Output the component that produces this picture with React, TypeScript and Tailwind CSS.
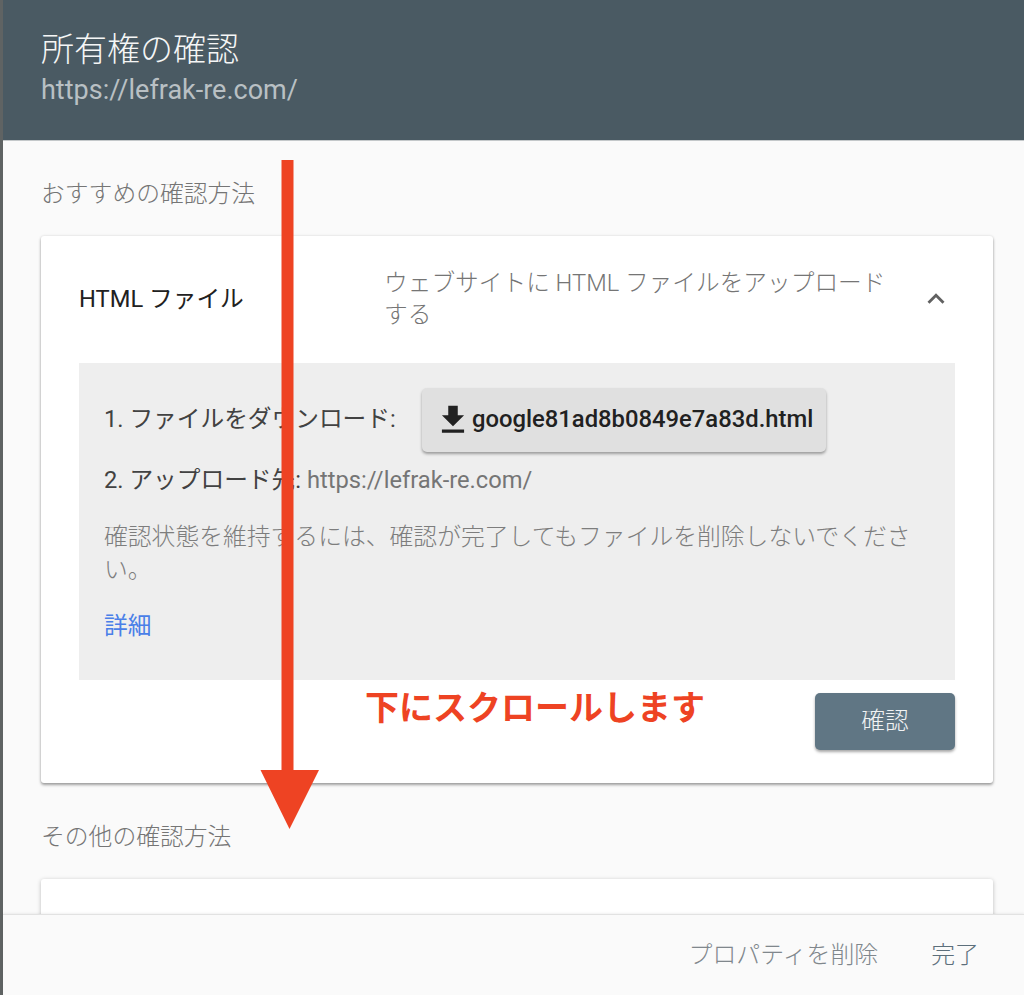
import React from "react";

const font = "font-['Roboto','Noto_Sans_CJK_JP',sans-serif]";

const DownloadIcon = () => (
  <svg width="38" height="38" viewBox="0 0 24 24" className="fill-[#212121] shrink-0">
    <path d="M19 9h-4V3H9v6H5l7 7 7-7zM5 18v2h14v-2H5z" />
  </svg>
);

const ChevronUp = () => (
  <svg width="34" height="34" viewBox="0 0 24 24" className="fill-[#616161] shrink-0">
    <path d="M12 8l-6 6 1.41 1.41L12 10.83l4.59 4.58L18 14z" />
  </svg>
);

const App: React.FC = () => {
  return (
    <div className={`relative flex w-[1024px] h-[995px] overflow-hidden bg-[#fafafa] ${font}`}>
      <div className="w-[3px] shrink-0 bg-[#5f6363]" />
      <div className="flex flex-col flex-1 min-w-0">
        <header className="h-[141px] shrink-0 bg-[#4a5a63] pl-[38px] pt-[30px] border-b border-[#c4c8ca]">
          <h1 className="text-[33px] leading-[40px] font-light text-[#f5f6f6]">所有権の確認</h1>
          <p className="text-[27px] leading-[30px] mt-[5px] text-[#b9c0c4]">https://lefrak-re.com/</p>
        </header>

        <main className="flex-1 min-h-0 overflow-hidden pl-[38px] pr-[31px]">
          <h2 className="text-[23.8px] leading-[32px] font-light text-[#757575] mt-[37px]">おすすめの確認方法</h2>

          <section className="mt-[26px] h-[547px] bg-white rounded-[3px] shadow-[0_2px_3px_rgba(0,0,0,0.35),0_0_3px_rgba(0,0,0,0.12)] px-[38px]">
            <div className="flex items-center h-[127px]">
              <div className="w-[305px] shrink-0 text-[23.7px] text-[#212121]">HTML ファイル</div>
              <div className="w-[510px] shrink-0 -mt-[2px] text-[23.7px] leading-[32px] font-light text-[#757575]">
                ウェブサイトに HTML ファイルをアップロードする
              </div>
              <div className="ml-[25px] -mt-[2px]">
                <ChevronUp />
              </div>
            </div>

            <div className="h-[317px] bg-[#eeeeee] pl-[25px] pr-[40px] pt-[25px]">
              <div className="flex items-center h-[64px]">
                <span className="w-[318px] shrink-0 text-[23.7px] text-[#424242]">1. ファイルをダウンロード:</span>
                <button className="flex items-center h-[64px] pl-[12px] pr-[13px] bg-[#e0e0e0] rounded-[5px] shadow-[0_2px_3px_rgba(0,0,0,0.35)] text-[23.8px] font-medium text-[#212121] whitespace-nowrap">
                  <DownloadIcon />
                  google81ad8b0849e7a83d.html
                </button>
              </div>
              <p className="mt-[12px] text-[23.7px] leading-[32px] text-[#424242]">
                2. アップロード先: <span className="text-[#757575]">https://lefrak-re.com/</span>
              </p>
              <p className="mt-[25px] text-[23.8px] leading-[33px] font-light text-[#7d7d7d]">
                確認状態を維持するには、確認が完了してもファイルを削除しないでください。
              </p>
              <a className="block mt-[23px] text-[23.7px] leading-[32px] text-[#4a7fe8]">詳細</a>
            </div>

            <div className="flex justify-end mt-[13px]">
              <button className="w-[140px] h-[57px] bg-[#607684] rounded-[5px] shadow-[0_2px_3px_rgba(0,0,0,0.35)] text-[23.7px] font-light text-[#f1f3f4]">
                確認
              </button>
            </div>
          </section>

          <h2 className="text-[23.8px] leading-[32px] font-light text-[#757575] mt-[38px]">その他の確認方法</h2>
          <section className="mt-[26px] h-[200px] bg-white rounded-[3px] shadow-[0_1px_4px_rgba(0,0,0,0.25)]" />
        </main>

        <footer className="relative h-[81px] shrink-0 bg-[#fafafa] border-t border-[#e2e2e2] shadow-[0_-1px_2px_rgba(0,0,0,0.06)] flex items-center justify-end pr-[45px] gap-[53px] pt-[2px] text-[23.9px] font-light">
          <span className="text-[#80878c]">プロパティを削除</span>
          <span className="text-[#5c6f7b]">完了</span>
        </footer>
      </div>

      {/* annotation painted over the screenshot */}
      <svg width="60" height="670" viewBox="0 0 60 670" className="absolute left-[260px] top-[160px]">
        <path d="M21.5 0H33.5V610H59L29.5 669L0.5 610H21.5Z" fill="#ee4323" />
      </svg>
      <div className="absolute left-[365px] top-[686px] text-[34px] leading-[44px] font-bold text-[#ee4323] whitespace-nowrap">
        下にスクロールします
      </div>
    </div>
  );
};

export default App;
